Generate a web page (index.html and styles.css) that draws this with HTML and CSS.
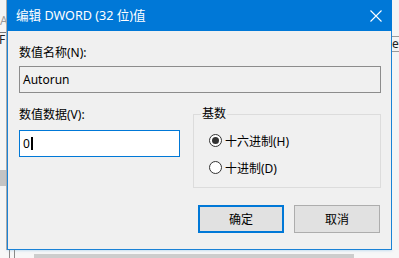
FILE: index.html
```html
<!DOCTYPE html>
<html lang="zh-CN">
<head>
<meta charset="utf-8">
<title>编辑 DWORD (32 位)值</title>
<link rel="stylesheet" href="styles.css">
</head>
<body>
<div class="desk">
  <div class="bg-left">
    <span class="bg-a">A</span>
    <span class="bg-f">F</span>
    <div class="bg-block"></div>
  </div>
  <div class="dialog">
    <div class="titlebar">
      <span class="title">编辑 DWORD (32 位)值</span>
      <svg class="close" width="12" height="12" viewBox="0 0 12 12"><path d="M0.5 0.5 L11.5 11.5 M11.5 0.5 L0.5 11.5" stroke="#ffffff" stroke-width="1.1" fill="none"/></svg>
    </div>
    <div class="content">
      <div class="label first">数值名称(N):</div>
      <div class="field name">Autorun</div>
      <div class="row">
        <div class="col">
          <div class="label">数值数据(V):</div>
          <div class="field data">0<span class="caret"></span></div>
        </div>
        <fieldset class="group">
          <legend>基数</legend>
          <div class="radio"><span class="dot checked"></span><span>十六进制(H)</span></div>
          <div class="radio"><span class="dot"></span><span>十进制(D)</span></div>
        </fieldset>
      </div>
      <div class="buttons">
        <div class="btn primary">确定</div>
        <div class="btn">取消</div>
      </div>
    </div>
  </div>
  <div class="bg-right"><span class="bg-es">es</span></div>
</div>
<div class="bg-bottom"><span class="vline"></span><span class="vline"></span><span class="scroll"></span></div>
</body>
</html>
```
FILE: styles.css
```css
html, body {
  margin: 0;
  padding: 0;
}
body {
  width: 399px;
  height: 258px;
  overflow: hidden;
  background: #f0f0f0;
  font-family: "Noto Sans", "Noto Sans CJK SC", sans-serif;
  font-size: 12px;
  color: #000;
}
.desk {
  display: flex;
  height: 250px;
}
.bg-left {
  width: 7px;
  flex: none;
  position: relative;
  background: #f4f4f4;
  border-right: 1px solid #a9a9a9;
  box-sizing: border-box;
  overflow: hidden;
}
.bg-a {
  position: absolute;
  left: 0;
  top: 14px;
  color: #9a9a9a;
  font-size: 12px;
  line-height: 14px;
}
.bg-f {
  position: absolute;
  left: -1px;
  top: 32px;
  color: #222;
  font-size: 12px;
  line-height: 14px;
  border-top: 1px solid #777;
  width: 10px;
}
.bg-block {
  position: absolute;
  left: 0;
  top: 170px;
  width: 7px;
  height: 16px;
  background: #c4c4c4;
}
.dialog {
  width: 385px;
  height: 250px;
  flex: none;
  box-sizing: border-box;
  border: 1px solid #1a82d6;
  border-top: none;
  background: #f0f0f0;
  box-shadow: 0 0 3px rgba(0, 120, 215, 0.35);
  display: flex;
  flex-direction: column;
}
.titlebar {
  height: 31px;
  background: #0078d7;
  display: flex;
  align-items: center;
  justify-content: space-between;
  padding: 0 9px 0 9px;
  margin: 0 -1px;
  color: #fff;
}
.title {
  font-size: 12.6px;
  line-height: 16px;
}
.close {
  display: block;
  margin-right: 1px;
}
.content {
  padding: 14px 10px 0 11px;
}
.label {
  line-height: 16px;
  height: 16px;
}
.field {
  box-sizing: border-box;
  height: 27px;
  line-height: 25px;
  padding-left: 3px;
}
.name {
  margin-top: 5px;
  background: #f0f0f0;
  border: 1px solid #8c8c8c;
}
.row {
  display: flex;
  gap: 13px;
  margin-top: 14px;
}
.col {
  width: 161px;
  flex: none;
}
.data {
  margin-top: 7px;
  background: #fff;
  border: 1px solid #0078d7;
  display: flex;
  align-items: center;
}
.caret {
  display: inline-block;
  width: 2px;
  height: 13px;
  background: #000;
  margin-left: 1px;
}
.group {
  margin: 0;
  width: 189px;
  height: 81px;
  box-sizing: border-box;
  border: 1px solid #dcdcdc;
  padding: 6px 0 0 15px;
  min-width: 0;
}
.group legend {
  padding: 0 1px;
  margin-left: -8px;
  line-height: 14px;
}
.radio {
  display: flex;
  align-items: center;
  height: 27px;
  gap: 3px;
}
.dot {
  width: 13px;
  height: 13px;
  box-sizing: border-box;
  border: 1px solid #333;
  border-radius: 50%;
  background: #fff;
  display: flex;
  align-items: center;
  justify-content: center;
}
.dot.checked::after {
  content: "";
  width: 7px;
  height: 7px;
  border-radius: 50%;
  background: #333;
}
.buttons {
  display: flex;
  justify-content: flex-end;
  gap: 10px;
  margin-top: 17px;
  padding-right: 1px;
}
.btn {
  width: 86px;
  height: 28px;
  box-sizing: border-box;
  background: #e1e1e1;
  border: 1px solid #adadad;
  display: flex;
  align-items: center;
  justify-content: center;
}
.btn.primary {
  border: 2px solid #0078d7;
}
.bg-right {
  flex: 1;
  position: relative;
  background: #f4f4f4;
  overflow: hidden;
}
.bg-es {
  position: absolute;
  left: 0;
  top: 36px;
  border-top: 1px solid #999;
  border-bottom: 1px solid #999;
  line-height: 14px;
  width: 10px;
  color: #222;
}
.bg-bottom {
  height: 8px;
  display: flex;
  align-items: flex-end;
  background: #f7f7f7;
}
.vline {
  width: 1px;
  height: 8px;
  background: #8a8a8a;
  margin-left: 9px;
}
.vline + .vline {
  margin-left: 4px;
}
.scroll {
  width: 320px;
  height: 4px;
  background: #cdcdcd;
  margin-left: 19px;
}
```
